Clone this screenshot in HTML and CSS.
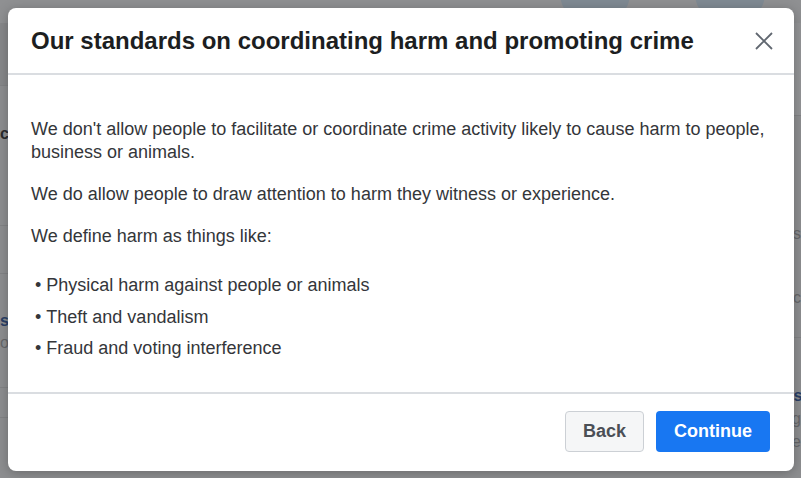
FILE: index.html
```html
<!DOCTYPE html>
<html>
<head>
  <title>Our standards on coordinating harm and promoting crime</title>
  <meta name="viewport" content="width=device-width, initial-scale=1">
  <link rel="stylesheet" href="styles.css">
</head>

<body>

  <div class="page">
    <div class="page-top">
      <span class="blob blob-a"></span>
      <span class="blob blob-b"></span>
    </div>
    <div class="page-cols">
      <div class="col col-left">
        <div class="row band-left"></div>
        <div class="row l-a">c</div>
        <div class="row l-b"></div>
        <div class="row l-c"><span class="link">s</span><br><span class="muted">o</span></div>
        <div class="row l-d"></div>
      </div>
      <div class="col col-right">
        <div class="row band-right"></div>
        <div class="row r-a muted">s<br>c</div>
        <div class="row r-b"><span class="link">ls</span><br><span class="muted">g<br>e</span></div>
      </div>
    </div>
  </div>

  <div class="modal" role="dialog">
    <header class="modal-head">
      <h1>Our standards on coordinating harm and promoting crime</h1>
      <button class="close" aria-label="Close">
        <svg width="18" height="18" viewBox="0 0 18 18">
          <path d="M1 1 L17 17 M17 1 L1 17" stroke="#606770" stroke-width="1.8" fill="none"/>
        </svg>
      </button>
    </header>

    <div class="modal-body">
      <p>We don't allow people to facilitate or coordinate crime activity likely to cause harm to people, business or animals.</p>
      <p>We do allow people to draw attention to harm they witness or experience.</p>
      <p>We define harm as things like:</p>
      <ul>
        <li>Physical harm against people or animals</li>
        <li>Theft and vandalism</li>
        <li>Fraud and voting interference</li>
      </ul>
    </div>

    <footer class="modal-foot">
      <button class="btn btn-back">Back</button>
      <button class="btn btn-continue">Continue</button>
    </footer>
  </div>

</body>
</html>
```

FILE: styles.css
```css
* {
  box-sizing: border-box;
}

html, body {
  margin: 0;
  height: 100%;
}

body {
  font-family: "Liberation Sans", Arial, sans-serif;
  background: #8d8e90;
  overflow: hidden;
  position: relative;
}

/* dimmed page behind the dialog */
.page {
  height: 100%;
  display: flex;
  flex-direction: column;
}

.page-top {
  height: 26px;
  background: #8f9092;
  position: relative;
  overflow: hidden;
}

.blob {
  position: absolute;
  top: -40px;
  width: 70px;
  height: 66px;
  border-radius: 50%;
  background: #7f8a93;
}
.blob-a { left: 560px; }
.blob-b { left: 695px; }

.page-cols {
  flex: 1;
  display: flex;
  justify-content: space-between;
}

.col {
  width: 12px;
  display: flex;
  flex-direction: column;
}

.col .row {
  flex: none;
  border-bottom: 1px solid #828385;
  font-size: 16px;
  color: #2a2b2d;
  font-weight: bold;
}
.col-right .row { text-align: right; }
.col .link { color: #2a3f66; font-weight: bold; }
.col .muted { color: #66676a; font-weight: normal; }

.band-left { height: 63px; background: #87888a; }
.l-a { height: 140px; padding-top: 38px; line-height: 20px; }
.l-b { height: 48px; }
.l-c { height: 114px; padding-top: 36px; line-height: 22px; }
.l-d { height: 30px; }

.band-right { height: 93px; background: #939496; }
.r-a { height: 222px; padding-top: 86px; line-height: 64px; }
.r-b { height: 140px; padding-top: 46px; line-height: 23px; border-bottom: 0 !important; }

/* dialog */
.modal {
  position: absolute;
  left: 8px;
  top: 8px;
  width: 786px;
  height: 463px;
  background: #fff;
  border-radius: 8px;
  box-shadow: 0 2px 12px rgba(0, 0, 0, 0.25);
  display: flex;
  flex-direction: column;
}

.modal-head {
  height: 67px;
  border-bottom: 2px solid #dadde1;
  display: flex;
  align-items: center;
  justify-content: space-between;
  padding: 0 21px 0 23px;
}

.modal-head h1 {
  margin: 0;
  font-size: 24px;
  font-weight: bold;
  color: #1c1e21;
}

.close {
  border: 0;
  background: none;
  padding: 0;
  width: 18px;
  height: 18px;
  margin-top: 1px;
}

.close svg {
  display: block;
}

.modal-body {
  flex: 1;
  padding: 43px 23px 0;
  font-size: 18px;
  line-height: 23px;
  color: #34363a;
}

.modal-body p {
  margin: 0 0 19px;
}

.modal-body ul {
  list-style: none;
  margin: 0;
  padding: 3px 0 0;
}

.modal-body li {
  line-height: 31.5px;
}

.modal-body li::before {
  content: "\2022";
  margin: 0 5px 0 4px;
}

.modal-foot {
  height: 79px;
  border-top: 2px solid #dadde1;
  display: flex;
  justify-content: flex-end;
  align-items: flex-start;
  gap: 12px;
  padding: 17px 24px 0;
}

.btn {
  height: 41px;
  font-family: inherit;
  font-size: 18px;
  font-weight: bold;
  border-radius: 4px;
  padding: 0;
}

.btn-back {
  width: 79px;
  background: #f5f6f7;
  border: 1px solid #ccd0d5;
  color: #4b4f56;
}

.btn-continue {
  width: 114px;
  background: #1877f2;
  border: 0;
  color: #fff;
}
```
